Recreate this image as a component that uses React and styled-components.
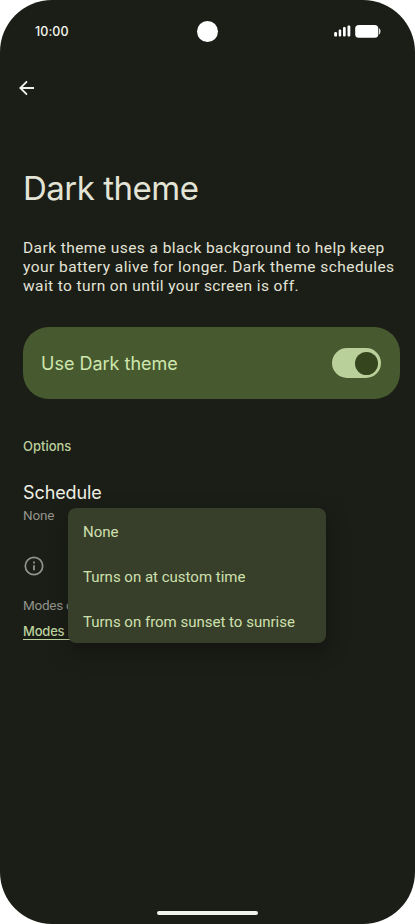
import { useState } from "react";
import styled, { createGlobalStyle } from "styled-components";

const scheduleOptions = [
  "None",
  "Turns on at custom time",
  "Turns on from sunset to sunrise",
];

export default function App() {
  const [isDark, setIsDark] = useState(true);
  const [schedule, setSchedule] = useState("None");

  return (
    <>
      <GlobalStyle />
      <Screen>
        <StatusBar>
          <Time>10:00</Time>
          <Camera />
          <StatusIcons>
            <SignalIcon />
            <BatteryIcon />
          </StatusIcons>
        </StatusBar>
        <BackButton aria-label="Back">
          <svg width="16" height="16" viewBox="0 0 16 16" fill="none">
            <path
              d="M15 8H1.5M8 1.3L1.3 8L8 14.7"
              stroke="#f1f3e8"
              strokeWidth="1.9"
            />
          </svg>
        </BackButton>
        <Title>Dark theme</Title>
        <Description>
          <Line $spacing="0.43px">
            Dark theme uses a black background to help keep
          </Line>
          <Line $spacing="0.46px">
            your battery alive for longer. Dark theme schedules
          </Line>
          <Line $spacing="0.4px">
            wait to turn on until your screen is off.
          </Line>
        </Description>
        <ToggleCard>
          <ToggleLabel>Use Dark theme</ToggleLabel>
          <Switch
            role="switch"
            aria-checked={isDark}
            $on={isDark}
            onClick={() => setIsDark(!isDark)}
          >
            <Knob />
          </Switch>
        </ToggleCard>
        <SectionLabel>Options</SectionLabel>
        <ScheduleRow>
          <ScheduleTitle>Schedule</ScheduleTitle>
          <ScheduleValue>{schedule}</ScheduleValue>
          <Menu>
            {scheduleOptions.map((option) => (
              <MenuItem key={option} onClick={() => setSchedule(option)}>
                {option}
              </MenuItem>
            ))}
          </Menu>
        </ScheduleRow>
        <Footer>
          <InfoIcon />
          <FooterText>Modes c</FooterText>
          <FooterLink>Modes</FooterLink>
        </Footer>
        <HomeBar />
      </Screen>
    </>
  );
}

const SignalIcon = () => (
  <svg width="17" height="12" viewBox="0 0 17 12" fill="#fff">
    <rect x="0.2" y="7" width="2.8" height="4.6" rx="1.2" />
    <rect x="4.7" y="4.6" width="2.5" height="7" rx="1" />
    <rect x="9" y="2" width="2.7" height="9.6" rx="1" />
    <rect x="13.5" y="0.5" width="2.8" height="11.1" rx="1" />
  </svg>
);

const BatteryIcon = () => (
  <svg width="26" height="13" viewBox="0 0 26 13" fill="#fff">
    <rect x="0.2" y="0" width="23.1" height="12.8" rx="3.6" />
    <path d="M24.1 3.3C25 3.7 25.4 4.8 25.4 6.3S25 9 24.1 9.4Z" />
  </svg>
);

const InfoIcon = () => (
  <svg width="20" height="20" viewBox="0 0 20 20" fill="none">
    <circle cx="10" cy="10" r="8.7" stroke="#92948b" strokeWidth="1.7" />
    <path d="M10 9.2V14.2M10 5.5V7.4" stroke="#92948b" strokeWidth="1.8" />
  </svg>
);

const GlobalStyle = createGlobalStyle`
  * {
    box-sizing: border-box;
  }

  body {
    margin: 0;
    background: #fff;
    font-family: Inter, sans-serif;
  }

  button {
    border: 0;
    padding: 0;
    background: none;
    font: inherit;
  }
`;

const Screen = styled.main`
  width: 415px;
  height: 924px;
  display: flex;
  flex-direction: column;
  padding: 0 15px 9px 23px;
  border-radius: 52px;
  background: #1b1d17;
  color: #e3e4d6;
  overflow: hidden;
  white-space: nowrap;
`;

const StatusBar = styled.header`
  height: 62px;
  display: grid;
  grid-template-columns: 181.5px 21px 1fr;
  align-items: center;
  margin: 0 -7px 0 -8px;
`;

const Time = styled.span`
  padding-left: 20px;
  font-size: 12.5px;
  font-weight: 500;
  letter-spacing: 0.1px;
  color: #f5f6ef;
`;

const Camera = styled.span`
  width: 21px;
  height: 21px;
  margin-top: 1.5px;
  border-radius: 50%;
  background: #fff;
`;

const StatusIcons = styled.div`
  display: flex;
  justify-content: flex-end;
  align-items: center;
  gap: 4px;
  padding-right: 26px;
`;

const BackButton = styled.button`
  width: 16px;
  height: 16px;
  margin: 18px 0 0 -4px;

  svg {
    display: block;
  }
`;

const Title = styled.h1`
  margin: 71px 0 0;
  font-size: 33px;
  font-weight: 400;
  line-height: 42px;
  letter-spacing: -0.5px;
`;

const Description = styled.p`
  margin: 30px 0 0;
  font-family: Roboto, sans-serif;
  font-size: 15.5px;
  line-height: 19px;
`;

const Line = styled.span`
  display: block;
  letter-spacing: ${({ $spacing }) => $spacing};
`;

const ToggleCard = styled.section`
  height: 72px;
  display: flex;
  align-items: center;
  justify-content: space-between;
  margin-top: 31px;
  padding: 0 19px 0 18px;
  border-radius: 26px;
  background: #475a2f;
`;

const ToggleLabel = styled.span`
  font-size: 18px;
  color: #cfe6ad;
`;

const Switch = styled.button`
  width: 49px;
  height: 30px;
  display: flex;
  align-items: center;
  justify-content: ${({ $on }) => ($on ? "flex-end" : "flex-start")};
  padding: 0 3.5px;
  border-radius: 15px;
  background: #b9d09a;
`;

const Knob = styled.span`
  width: 23px;
  height: 23px;
  border-radius: 50%;
  background: #35451d;
`;

const SectionLabel = styled.h2`
  margin: 38px 0 0;
  font-size: 13px;
  font-weight: 500;
  line-height: 18px;
  color: #bdd19c;
`;

const ScheduleRow = styled.section`
  position: relative;
  height: 69px;
  margin-top: 26px;
`;

const ScheduleTitle = styled.h3`
  margin: 0;
  font-size: 18px;
  font-weight: 400;
  line-height: 23px;
  letter-spacing: -0.1px;
  color: #eeefe3;
`;

const ScheduleValue = styled.p`
  margin: 0;
  font-family: Roboto, sans-serif;
  font-size: 13.5px;
  line-height: 22px;
  letter-spacing: -0.2px;
  color: #92948b;
`;

const Menu = styled.div`
  position: absolute;
  z-index: 1;
  top: 27px;
  left: 45px;
  width: 258px;
  height: 135px;
  display: flex;
  flex-direction: column;
  border-radius: 8px;
  background: #373e29;
  box-shadow: 2px 8px 22px rgba(0, 0, 0, 0.3);
`;

const MenuItem = styled.button`
  flex: 1;
  padding: 2px 15px 0;
  font-family: Roboto, sans-serif;
  font-size: 15px;
  text-align: left;
  color: #cfe0af;
`;

const Footer = styled.footer`
  display: flex;
  flex-direction: column;
  align-items: flex-start;
  margin-top: 6px;

  svg {
    margin-left: 1px;
  }
`;

const FooterText = styled.p`
  margin: 19px 0 0;
  font-family: Roboto, sans-serif;
  font-size: 13.5px;
  line-height: 20px;
  letter-spacing: -0.25px;
  color: #92948b;
`;

const FooterLink = styled.a`
  margin-top: 9px;
  padding-right: 6px;
  border-bottom: 1px solid #bdd19c;
  font-size: 13px;
  font-weight: 500;
  line-height: 15px;
  letter-spacing: -0.2px;
  color: #bdd19c;
`;

const HomeBar = styled.div`
  width: 101px;
  height: 4px;
  align-self: center;
  margin: auto 8px 0 0;
  border-radius: 2px;
  background: #f1f4ec;
`;
